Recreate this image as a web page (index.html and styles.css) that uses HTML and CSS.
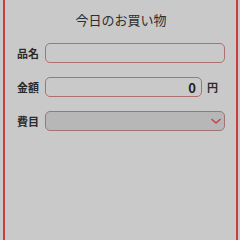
FILE: index.html
```html
<!DOCTYPE html>
<html lang="ja">
<head>
    <meta charset="UTF-8">
    <meta name="viewport" content="width=device-width, initial-scale=1.0">
    <title>今日のお買い物</title>
    <link rel="stylesheet" href="styles.css">
</head>
<body>
    <div class="pagina">
        <h1 class="titulo">今日のお買い物</h1>

        <div class="formulario">
            <div class="fila">
                <label for="hinmei">品名</label>
                <input type="text" id="hinmei" class="campo">
            </div>

            <div class="fila">
                <label for="kingaku">金額</label>
                <div class="monto">
                    <input type="text" id="kingaku" class="campo numero" value="0">
                    <span class="unidad">円</span>
                </div>
            </div>

            <div class="fila">
                <label for="himoku">費目</label>
                <div class="selector">
                    <select id="himoku" class="campo combo">
                        <option value=""></option>
                        <option value="shokuhi">食費</option>
                        <option value="nichiyohin">日用品</option>
                    </select>
                    <svg class="flecha" width="10" height="7" viewBox="0 0 10 7">
                        <path d="M1 1.5 L5 5 L9 1.5" fill="none" stroke="#c0444a" stroke-width="1.6" stroke-linecap="round" stroke-linejoin="round"/>
                    </svg>
                </div>
            </div>
        </div>
    </div>
</body>
</html>
```

FILE: styles.css
```css
body {
    font-family: "Noto Sans CJK JP", "Noto Sans", sans-serif;
    background-color: #c9c9c9;
    color: #333;
    margin: 0;
}

.pagina {
    margin: 0 2px 0 3px;
    min-height: 240px;
    box-sizing: border-box;
    border-left: 2px solid #cc3b3f;
    border-right: 2px solid #cc3b3f;
    padding: 10px 11px 0 12px;
}

.titulo {
    font-size: 13px;
    font-weight: normal;
    line-height: 20px;
    text-align: center;
    margin: 0 0 13px 0;
    color: #2e2e2e;
}

.formulario {
    display: flex;
    flex-direction: column;
    gap: 14px;
}

.fila {
    display: flex;
    align-items: center;
}

.fila label {
    width: 28px;
    flex-shrink: 0;
    font-size: 11px;
    font-weight: bold;
    color: #2b2b2b;
}

.campo {
    flex: 1;
    width: 0;
    min-width: 0;
    height: 20px;
    box-sizing: border-box;
    border: 1px solid #ad7072;
    border-radius: 5px;
    background-color: transparent;
    font-family: inherit;
    padding: 0 5px;
    outline: none;
}

.monto {
    flex: 1;
    min-width: 0;
    display: flex;
    align-items: center;
}

.numero {
    text-align: right;
    font-size: 13px;
    font-weight: bold;
    color: #222;
    padding-right: 5px;
}

.unidad {
    width: 23px;
    flex-shrink: 0;
    box-sizing: border-box;
    padding-left: 5px;
    font-size: 11px;
    font-weight: bold;
    color: #2b2b2b;
}

.selector {
    flex: 1;
    min-width: 0;
    display: flex;
    position: relative;
}

.combo {
    appearance: none;
    -webkit-appearance: none;
    background-color: #b7b7b7;
    border-color: #a07476;
}

.flecha {
    position: absolute;
    right: 4px;
    top: 7px;
}
```
